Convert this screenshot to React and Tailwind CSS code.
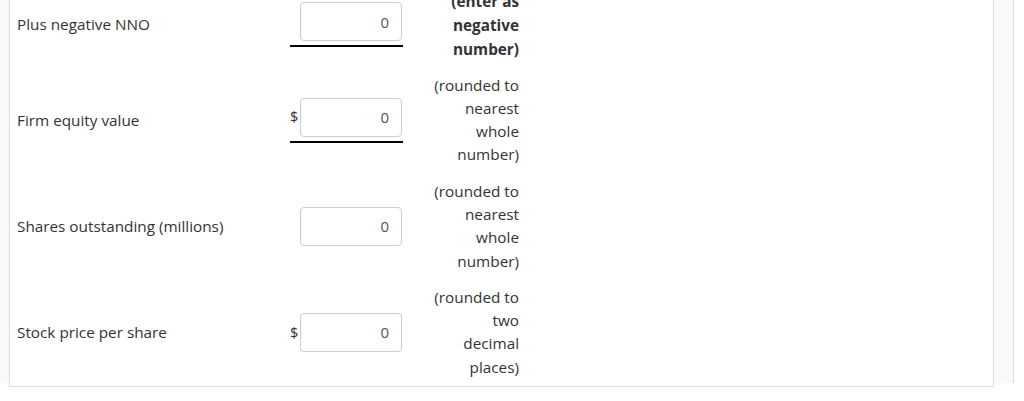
import React from 'react';

const rows = [
    { label: 'Plus negative NNO', dollar: false, underline: true, bold: true, note: ['(enter as', 'negative', 'number)'] },
    { label: 'Firm equity value', dollar: true, underline: true, bold: false, note: ['(rounded to', 'nearest', 'whole', 'number)'] },
    { label: 'Shares outstanding (millions)', dollar: false, underline: false, bold: false, note: ['(rounded to', 'nearest', 'whole', 'number)'] },
    { label: 'Stock price per share', dollar: true, underline: false, bold: false, note: ['(rounded to', 'two', 'decimal', 'places)'] },
];

const App = () => {
    return (
        <div className="w-[1024px] h-[401px] overflow-hidden bg-white" style={{ fontFamily: '"Open Sans", "Liberation Sans", sans-serif' }}>
            <div className="w-[1014px] h-full bg-[#f9f9f9] border-r border-[#dcdcdc] pl-[9px]">
                <div className="w-[985px] -mt-[18px] bg-white border-x border-b border-[#dddddd] pl-[7px]">
                    {rows.map((row) => (
                        <div key={row.label} className="flex items-center py-[6.5px] text-[15.3px] text-[#333333]">
                            {/* Label */}
                            <div className="w-[273px]">{row.label}</div>

                            {/* Input cell */}
                            <div className={`w-[113px] flex flex-col ${row.underline ? 'pb-[4px] border-b-2 border-black' : ''}`}>
                                <div className="flex items-center">
                                    <span className="w-[10px] text-[14.5px]">{row.dollar ? '$' : ''}</span>
                                    <input
                                        readOnly
                                        value="0"
                                        className="w-[102px] h-[39px] border border-[#cccccc] rounded-[4px] px-[12px] text-right text-[15px] text-[#555555] outline-none"
                                    />
                                </div>
                            </div>

                            {/* Note */}
                            <div className={`w-[116px] text-right leading-[23.3px] ${row.bold ? 'font-bold leading-[24px]' : ''}`}>
                                {row.note.map((line) => (
                                    <div key={line} className="whitespace-nowrap">{line}</div>
                                ))}
                            </div>
                        </div>
                    ))}
                </div>
            </div>
        </div>
    );
};

export default App;
